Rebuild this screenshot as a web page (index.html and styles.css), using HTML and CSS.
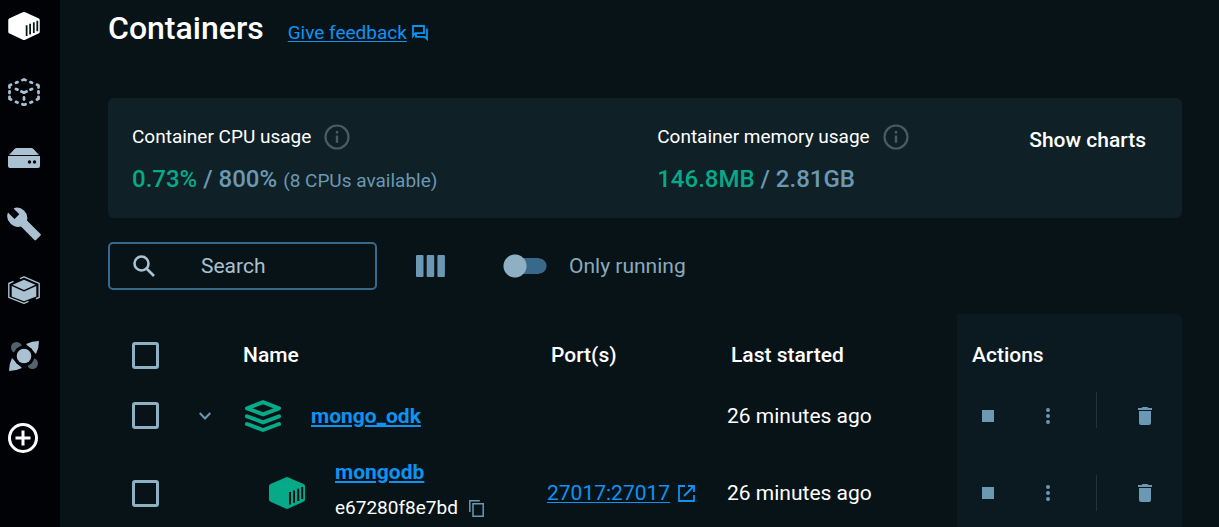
FILE: index.html
```html
<!DOCTYPE html>
<html lang="en">
<head>
<meta charset="utf-8">
<meta name="viewport" content="width=device-width, initial-scale=1">
<title>Containers</title>
<link rel="stylesheet" href="styles.css">
</head>
<body>
<svg class="sprite" aria-hidden="true">
  <symbol id="container" viewBox="0 0 36 32">
    <path fill="currentColor" d="M16.600.4a3.500 3.500 0 0 1 2.800 0L34.500 7q1.500.7 1.500 2v13.500q0 1.500-1.500 2.200L19.400 31.600a3.500 3.500 0 0 1-2.800 0L1.500 24.700Q0 24 0 22.500V9q0-1.300 1.500-2z"/>
    <path class="slots" d="M21 15v12.500M25 13.500v12.200M29.200 11.800V24M33.200 10v12"/>
  </symbol>
  <symbol id="info" viewBox="0 0 26 26">
    <circle cx="13" cy="13" r="11.500" fill="none" stroke="currentColor" stroke-width="2.200"/>
    <path d="M13 11.500v7.200M13 7v2.500" stroke="currentColor" stroke-width="2.400"/>
  </symbol>
  <symbol id="trash" viewBox="0 0 14 18">
    <path fill="currentColor" d="M0 1h3.500l1-1h5l1 1H14v2H0zM1 4h12v12q0 2-2 2H3q-2 0-2-2z"/>
  </symbol>
  <symbol id="dots" viewBox="0 0 4 16">
    <g fill="currentColor"><circle cx="2" cy="2" r="2"/><circle cx="2" cy="8" r="2"/><circle cx="2" cy="14" r="2"/></g>
  </symbol>
</svg>
<div class="app">
  <nav class="sidebar" aria-label="Main">
    <button class="nav-item active" type="button" aria-label="Containers"><svg width="32" height="28"><use href="#container"/></svg></button>
    <button class="nav-item" type="button" aria-label="Images">
      <svg width="32" height="28" viewBox="0 0 32 28" fill="none" stroke="currentColor" stroke-width="2.800" stroke-linecap="round" stroke-linejoin="round"><path d="M14.500 2l1.500-.5 1.500.5M22.500 4.100l1.500.6M29 6.800l1.500.8v2M30.500 13.500v1.500M30.500 18.800v2l-1.500.8M24 23.900l-1.500.6M17.500 26.300l-1.500.5-1.500-.5M9.500 24.500L8 23.900M3 21.600l-1.500-.8v-2M1.500 15v-1.500M1.500 9.600v-2L3 6.800M8 4.700l1.500-.6M8 11l1.500.6M22.500 11.600L24 11M13.500 13.500l2.500 1.200 2.500-1.200M16 19.500v2"/></svg>
    </button>
    <button class="nav-item" type="button" aria-label="Volumes">
      <svg width="32" height="20" viewBox="0 0 32 20"><path fill="currentColor" d="M8.500 0h15q1 0 1.800.8L31 7H1L6.700.8Q7.500 0 8.500 0zM0 8h32v10q0 2-2 2H2q-2 0-2-2z"/><circle cx="21.500" cy="14" r="1.700"/><circle cx="26.500" cy="14" r="1.700"/></svg>
    </button>
    <button class="nav-item" type="button" aria-label="Builds">
      <svg width="34" height="34" viewBox="0 0 34 34"><path fill="currentColor" d="M6.500 1.500Q12-1 17 3.500q4.500 4.500 3 10L33.500 27q.8.800 0 1.600l-4.500 4.500q-.8.800-1.600 0L14 19.500q-6 1.500-10.500-3Q-1.500 11.500 1 5.500L7.500 12l4.800-4.700z"/></svg>
    </button>
    <button class="nav-item" type="button" aria-label="Dev Environments">
      <svg width="32" height="28" viewBox="0 0 32 28"><path fill="currentColor" d="M16 3.700l11.500 5L16 14 4.500 8.700zM3.700 10L16 15.600 28.300 10v10.500L16 25.300 3.700 20.500z"/><path fill="none" stroke="currentColor" stroke-width="1.400" stroke-linecap="round" stroke-linejoin="round" d="M12.500 2.300L16 .8l15.200 6.500v14L28.500 22.500M5 5.600L.8 7.500v13.800L16 27.300l4-1.600"/></svg>
    </button>
    <button class="nav-item" type="button" aria-label="Docker Scout">
      <svg width="32" height="32" viewBox="0 0 32 32"><circle cx="8.500" cy="7.500" r="5.500" fill="#52626d"/><circle cx="24.500" cy="23.500" r="5.500" fill="#52626d"/><path fill="currentColor" d="M31 1Q31 8 28 14L18 4Q24 1 31 1zM1 31Q1 24 4 18l10 10Q8 31 1 31z"/><circle class="hole" cx="16" cy="16" r="10.500"/><circle cx="16" cy="16" r="7.300" fill="currentColor"/></svg>
    </button>
    <button class="nav-item add" type="button" aria-label="Add extensions">
      <svg width="32" height="32" viewBox="0 0 32 32" fill="none" stroke="currentColor" stroke-width="3"><circle cx="15" cy="16" r="13.500"/><path d="M7.500 16h15M15 8.500v15"/></svg>
    </button>
  </nav>
  <main class="main">
    <header class="heading">
      <h1>Containers</h1>
      <a class="feedback" href="#"><span>Give feedback</span>
        <svg width="16" height="16" viewBox="0 0 16 16" fill="none" stroke="currentColor" stroke-width="1.800"><path d="M1 11V1h11v7.200H3.300zM15 3.500v10.500l-2.200-2.200H4V9"/></svg>
      </a>
    </header>
    <section class="usage">
      <div class="metric">
        <div class="label">Container CPU usage <svg width="26" height="26"><use href="#info"/></svg></div>
        <div class="value"><b>0.73%</b> / 800% <small>(8 CPUs available)</small></div>
      </div>
      <div class="metric">
        <div class="label">Container memory usage <svg width="26" height="26"><use href="#info"/></svg></div>
        <div class="value"><b>146.8MB</b> / 2.81GB</div>
      </div>
      <button class="charts" type="button">Show charts</button>
    </section>
    <div class="toolbar">
      <label class="search">
        <svg width="22" height="22" viewBox="0 0 22 22" fill="none" stroke="currentColor" stroke-width="2.600"><circle cx="8.500" cy="8.500" r="7"/><path d="M13.500 13.500l7.500 7.500"/></svg>
        <input type="text" placeholder="Search" aria-label="Search">
      </label>
      <button class="columns" type="button" aria-label="Columns"><svg width="29" height="22" viewBox="0 0 29 22" fill="currentColor"><rect width="7.500" height="22" rx="1"/><rect x="10.700" width="7.500" height="22" rx="1"/><rect x="21.400" width="7.500" height="22" rx="1"/></svg></button>
      <label class="only-running"><input class="switch" type="checkbox">Only running</label>
    </div>
    <table class="list">
      <colgroup><col class="c-check"><col class="c-expand"><col><col class="c-ports"><col class="c-started"><col class="c-actions"></colgroup>
      <thead>
        <tr>
          <th><input class="check" type="checkbox" aria-label="Select all"></th>
          <th></th>
          <th>Name</th>
          <th>Port(s)</th>
          <th>Last started</th>
          <th class="actions">Actions</th>
        </tr>
      </thead>
      <tbody>
        <tr class="group">
          <td><input class="check" type="checkbox" aria-label="Select mongo_odk"></td>
          <td><button class="expand" type="button" aria-label="Collapse"><svg width="12" height="8" viewBox="0 0 12 8" fill="none" stroke="currentColor" stroke-width="2"><path d="M.7 1L6 6.500 11.300 1"/></svg></button></td>
          <td><div class="name">
            <svg class="green" width="36" height="32" viewBox="0 0 36 32" fill="none" stroke="currentColor" stroke-width="4" stroke-linecap="round" stroke-linejoin="round"><path d="M18 2.200L34 8.300 18 14.300 2 8.300zM2 16.300l16 6 16-6M2 24l16 6 16-6"/></svg>
            <a class="strong" href="#">mongo_odk</a>
          </div></td>
          <td></td>
          <td>26 minutes ago</td>
          <td class="actions"><div class="tools">
            <button type="button" aria-label="Stop"><span class="stop"></span></button>
            <button type="button" aria-label="More"><svg width="4" height="16"><use href="#dots"/></svg></button>
            <span class="divider"></span>
            <button type="button" aria-label="Delete"><svg width="14" height="18"><use href="#trash"/></svg></button>
          </div></td>
        </tr>
        <tr class="item">
          <td><input class="check" type="checkbox" aria-label="Select mongodb"></td>
          <td></td>
          <td><div class="name nested">
            <svg class="green" width="36" height="32"><use href="#container"/></svg>
            <div class="ident">
              <a class="strong" href="#">mongodb</a>
              <div class="hash">e67280f8e7bd
                <button type="button" aria-label="Copy ID"><svg width="15" height="17" viewBox="0 0 15 17" fill="none" stroke="currentColor" stroke-width="1.500"><path d="M.8 12V.8h10M4 3.800h10.200v12.400H4z"/></svg></button>
              </div>
            </div>
          </div></td>
          <td><a class="port" href="#"><span>27017:27017</span>
            <svg width="17" height="17" viewBox="0 0 17 17" fill="none" stroke="currentColor" stroke-width="1.800"><path d="M7 1H1v15h15v-6M10 1h6v6M16 1L6 11"/></svg></a></td>
          <td>26 minutes ago</td>
          <td class="actions"><div class="tools">
            <button type="button" aria-label="Stop"><span class="stop"></span></button>
            <button type="button" aria-label="More"><svg width="4" height="16"><use href="#dots"/></svg></button>
            <span class="divider"></span>
            <button type="button" aria-label="Delete"><svg width="14" height="18"><use href="#trash"/></svg></button>
          </div></td>
        </tr>
      </tbody>
    </table>
  </main>
</div>
</body>
</html>
```

FILE: styles.css
```css
:root {
  --bg: #081318;
  --rail: #010206;
  --blue: #0c93f4;
  --green: #06a988;
  --slate: #6b98b3;
  --pale: #a9c1d0;
}
* { box-sizing: border-box; }
body {
  margin: 0;
  background: var(--bg);
  color: #fff;
  font: 400 21px/28px Roboto, sans-serif;
}
button {
  display: flex;
  align-items: center;
  justify-content: center;
  padding: 0;
  border: 0;
  background: none;
  color: inherit;
  font: inherit;
}
svg { display: block; flex: none; }
a { color: var(--blue); text-underline-offset: 2px; text-decoration-thickness: 2px; }
.sprite { display: none; }
.slots { fill: none; stroke: var(--bg); stroke-width: 2; }

.app { display: flex; height: 100vh; overflow: hidden; }
.sidebar {
  display: flex;
  flex: none;
  flex-direction: column;
  gap: 18px;
  width: 60px;
  padding-top: 2px;
  background: var(--rail);
  color: var(--pale);
}
.nav-item { width: 48px; height: 48px; flex: none; }
.nav-item.active, .nav-item.add { color: #fff; }
.nav-item.add { margin-top: 16px; }
.hole { fill: var(--rail); }

.main { flex: 1; min-width: 0; padding: 8px 37px 0 48px; }
.heading { display: flex; align-items: center; gap: 24px; height: 40px; }
h1 { margin: 0; font-size: 32px; line-height: 40px; font-weight: 500; }
.feedback { display: flex; align-items: center; gap: 5px; padding-top: 10px; font-size: 19px; text-decoration: none; }
.port { text-decoration: none; }
.feedback span, .port span { text-decoration: underline; text-decoration-thickness: 1px; text-underline-offset: 2px; }

.usage {
  display: flex;
  align-items: flex-start;
  height: 120px;
  margin-top: 50px;
  padding: 24px 36px 24px 24px;
  border-radius: 6px;
  background: #0f2027;
}
.metric { flex: 0 1 372px; }
.metric:first-child { flex: 1 1 525px; }
.label { display: flex; align-items: center; gap: 13px; height: 30px; font-size: 19px; }
.label svg { color: #4d5a62; }
.value { margin-top: 12px; color: var(--slate); font-size: 24px; line-height: 30px; font-weight: 500; }
.value b { color: var(--green); font-weight: 500; }
.value small { font-size: 19px; font-weight: 400; }
.charts { height: 36px; font-weight: 500; white-space: nowrap; }

.toolbar { display: flex; align-items: center; height: 48px; margin-top: 24px; }
.search {
  display: flex;
  align-items: center;
  gap: 46px;
  width: 269px;
  height: 48px;
  padding: 0 23px;
  border: 2px solid #39698a;
  border-radius: 5px;
  color: var(--pale);
}
.search input { width: 100%; min-width: 0; padding: 0; border: 0; outline: 0; background: none; color: inherit; font: inherit; }
.search input::placeholder { color: var(--pale); opacity: 1; }
.columns { margin-left: 39px; color: var(--slate); }
.only-running { display: flex; align-items: center; gap: 22px; margin-left: 58px; color: #8aabbe; }
.switch {
  width: 44px;
  height: 24px;
  margin: 0;
  appearance: none;
  background:
    radial-gradient(circle at 12px 12px, #8fb0c2 11px, transparent 12px),
    linear-gradient(#39698a, #39698a) 12px 4px / 24px 16px no-repeat,
    radial-gradient(circle at 36px 12px, #39698a 7px, transparent 8px);
}

.list { width: 100%; margin-top: 24px; border-collapse: collapse; table-layout: fixed; }
.c-check { width: 74px; }
.c-expand { width: 45px; }
.c-ports { width: 180px; }
.c-started { width: 246px; }
.c-actions { width: 225px; }
th, td { padding: 0 0 0 16px; text-align: left; vertical-align: middle; }
th { height: 70px; padding: 12px 0 0 20px; font-weight: 500; }
th:nth-child(3) { padding-left: 16px; }
th:first-child, td:first-child { padding-left: 24px; }
th.actions { padding-left: 15px; border-radius: 0 6px 0 0; }
.actions { background: #0b1a21; }
td.actions { padding: 0; }
td:nth-child(2) { padding: 0; }
.group td { height: 63px; }
.item td { height: 92px; }
.check {
  display: block;
  width: 27px;
  height: 27px;
  margin: 0;
  appearance: none;
  border: 3px solid #8fb0c2;
  border-radius: 3px;
}
.expand { width: 45px; height: 32px; color: var(--slate); }
.name { display: flex; align-items: center; gap: 30px; padding-left: 2px; }
.name.nested { padding-left: 26px; }
.green { color: var(--green); }
.strong { font-weight: 700; }
.ident { display: flex; flex-direction: column; gap: 8px; align-items: flex-start; padding-bottom: 6px; }
.hash { display: flex; align-items: center; gap: 11px; font-size: 19px; }
.hash button { color: var(--slate); }
.port { display: flex; align-items: center; gap: 8px; }
.tools { display: flex; align-items: center; padding-left: 1px; color: var(--slate); }
.tools button { width: 60px; height: 48px; }
.stop { width: 12px; height: 12px; background: currentColor; }
.divider { width: 1px; height: 36px; margin: 0 18px; background: #22333c; }
.group .divider { margin-bottom: 12px; }
```
